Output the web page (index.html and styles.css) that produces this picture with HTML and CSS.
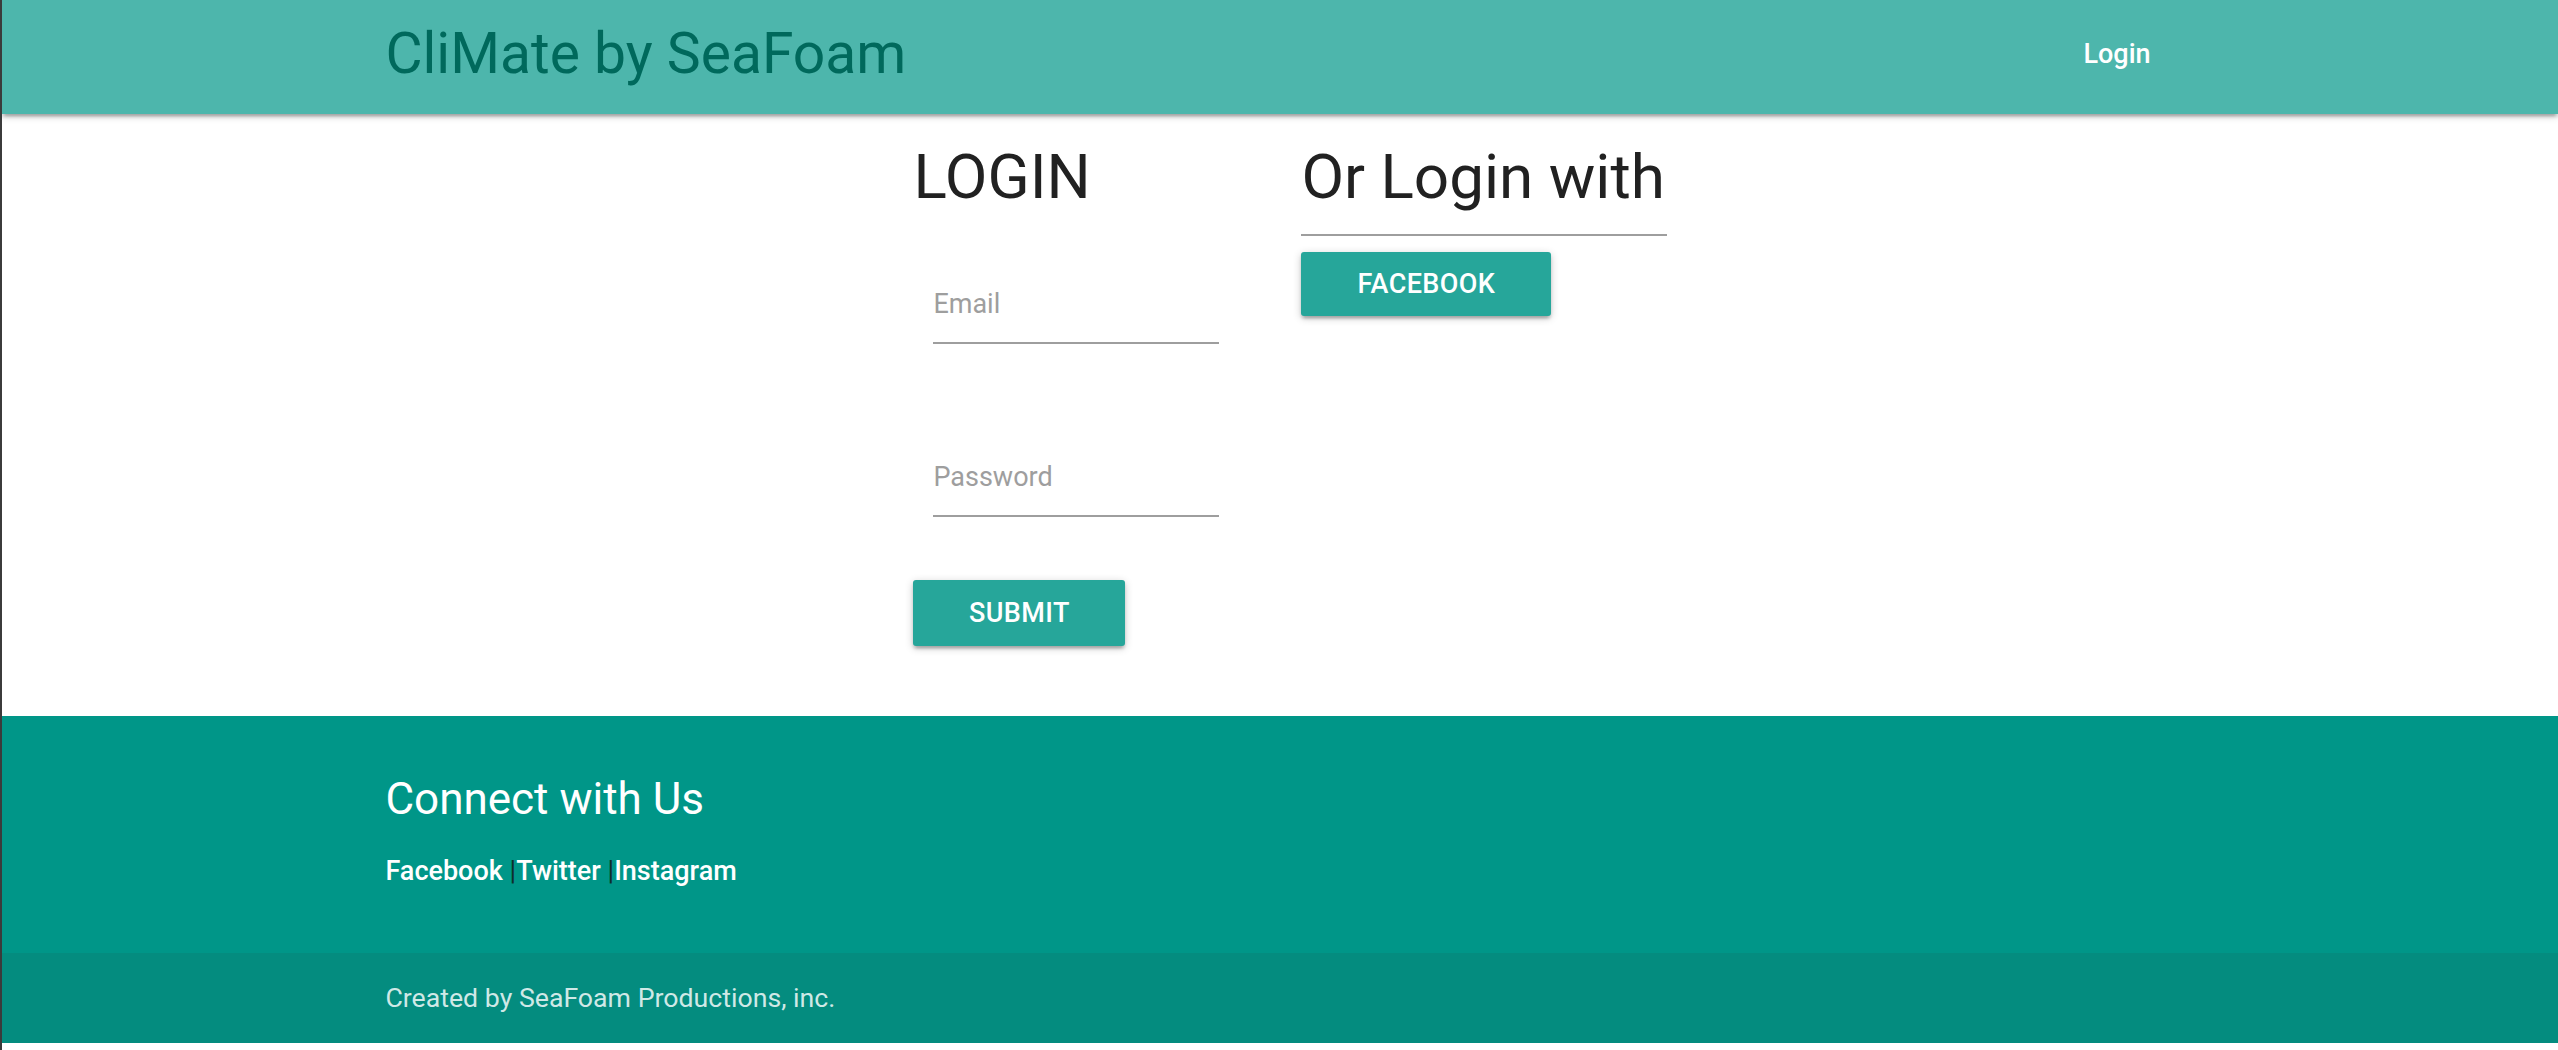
FILE: index.html
```html
<!DOCTYPE html>
<html lang="en">
<head>
<meta charset="utf-8">
<title>CliMate by SeaFoam</title>
<link rel="stylesheet" href="styles.css">
</head>
<body>
<nav class="navbar">
  <div class="container nav-inner">
    <a class="brand-logo" href="#">CliMate by SeaFoam</a>
    <ul class="nav-links">
      <li><a href="#">Login</a></li>
    </ul>
  </div>
</nav>

<main class="main">
  <div class="container">
    <div class="login-row">
      <div class="col-login">
        <h1 class="heading">LOGIN</h1>
        <form class="login-form">
          <div class="input-field">
            <input type="email" placeholder="Email">
          </div>
          <div class="input-field input-field-second">
            <input type="password" placeholder="Password">
          </div>
          <button type="button" class="btn btn-submit">SUBMIT</button>
        </form>
      </div>
      <div class="col-social">
        <h1 class="heading heading-rule">Or Login with</h1>
        <button type="button" class="btn btn-facebook">FACEBOOK</button>
      </div>
    </div>
  </div>
</main>

<footer class="page-footer">
  <div class="container footer-main">
    <h5 class="footer-title">Connect with Us</h5>
    <p class="footer-links"><a href="#">Facebook</a> <span class="sep">|</span><a href="#">Twitter</a> <span class="sep">|</span><a href="#">Instagram</a></p>
  </div>
  <div class="footer-copyright">
    <div class="container">Created by SeaFoam Productions, inc.</div>
  </div>
</footer>
</body>
</html>
```

FILE: styles.css
```css
* {
  box-sizing: border-box;
}

html, body {
  margin: 0;
  padding: 0;
}

body {
  font-family: Roboto, "Noto Sans", "Liberation Sans", sans-serif;
  background: #ffffff;
  color: rgba(0, 0, 0, 0.87);
  border-left: 2px solid #3b3b3b;
  min-height: 1050px;
}

a {
  text-decoration: none;
}

.container {
  width: 70%;
  margin: 0 auto;
}

/* NAVBAR */
.navbar {
  height: 114px;
  background: #4db6ac;
  box-shadow: 0 3px 3px 0 rgba(0, 0, 0, 0.14), 0 5px 2px -3px rgba(0, 0, 0, 0.12), 0 2px 8px 0 rgba(0, 0, 0, 0.2);
  position: relative;
  z-index: 2;
}

.nav-inner {
  display: flex;
  justify-content: space-between;
  align-items: flex-start;
  height: 114px;
}

.brand-logo {
  color: #00695c;
  font-size: 57px;
  line-height: 108px;
  font-weight: 400;
}

.nav-links {
  list-style: none;
  margin: 0;
  padding: 0;
}

.nav-links a {
  display: block;
  color: #ffffff;
  font-size: 27px;
  font-weight: 500;
  line-height: 108px;
  padding: 0 24px;
}

/* MAIN */
.main {
  padding: 29px 0 70px;
}

.login-row {
  display: flex;
  margin-left: 528px;
}

.col-login {
  width: 388px;
}

.col-social {
  width: 366px;
}

.heading {
  margin: 0;
  font-size: 62px;
  line-height: 68px;
  font-weight: 400;
  color: #212121;
}

.heading-rule {
  padding-bottom: 23px;
  border-bottom: 2px solid #9e9e9e;
}

.login-form {
  margin: 0;
}

.input-field {
  margin-top: 55px;
  padding: 0 20px;
}

.input-field-second {
  margin-top: 95px;
}

.input-field input {
  display: block;
  width: 286px;
  height: 78px;
  margin: 0;
  padding: 0;
  border: none;
  border-bottom: 2px solid #9e9e9e;
  outline: none;
  background: transparent;
  font-family: Roboto, "Noto Sans", "Liberation Sans", sans-serif;
  font-size: 27px;
  color: #212121;
}

.input-field input::placeholder {
  color: #9e9e9e;
}

.btn {
  display: block;
  border: none;
  border-radius: 3px;
  background: #26a69a;
  color: #ffffff;
  font-family: Roboto, "Noto Sans", "Liberation Sans", sans-serif;
  font-size: 27px;
  font-weight: 500;
  letter-spacing: 0.4px;
  text-align: center;
  padding: 0;
  cursor: pointer;
  box-shadow: 0 3px 3px 0 rgba(0, 0, 0, 0.14), 0 5px 2px -3px rgba(0, 0, 0, 0.12), 0 2px 8px 0 rgba(0, 0, 0, 0.2);
}

.btn-submit {
  margin-top: 63px;
  width: 212px;
  height: 66px;
}

.btn-facebook {
  margin-top: 16px;
  width: 250px;
  height: 64px;
}

/* FOOTER */
.page-footer {
  background: #009688;
  color: #ffffff;
}

.footer-main {
  padding: 59px 0 66px;
}

.footer-title {
  margin: 0;
  font-size: 44px;
  line-height: 48px;
  font-weight: 400;
  color: #ffffff;
}

.footer-links {
  margin: 32px 0 0;
  font-size: 27px;
  line-height: 32px;
  font-weight: 500;
  color: #0f2f2b;
}

.footer-links a {
  color: #ffffff;
}

.sep {
  font-weight: 400;
}

.footer-copyright {
  height: 90px;
  line-height: 90px;
  background: #048c7f;
  color: rgba(255, 255, 255, 0.82);
  font-size: 26.7px;
  font-weight: 400;
}
```
